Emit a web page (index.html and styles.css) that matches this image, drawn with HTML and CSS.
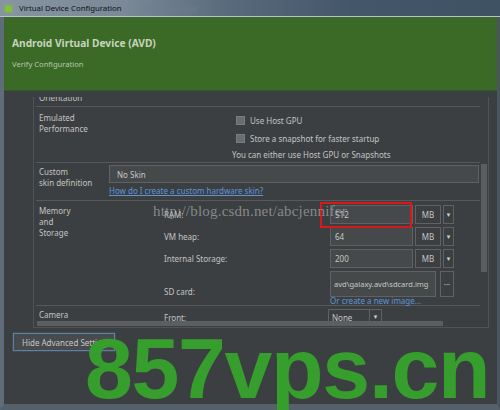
FILE: index.html
```html
<!DOCTYPE html>
<html>
<head>
<meta charset="utf-8">
<link rel="stylesheet" href="styles.css">
</head>
<body>
<div class="window">
  <div class="titlebar">
    <svg class="appicon" width="11" height="11" viewBox="0 0 11 11">
      <rect x="0" y="0" width="11" height="11" fill="#8a9a88"/>
      <path d="M2 9 V6 A3.5 3.5 0 0 1 9 6 V9 Z" fill="#7cc43a"/>
      <line x1="3" y1="2" x2="4" y2="3.4" stroke="#7cc43a" stroke-width="0.8"/>
      <line x1="8" y1="2" x2="7" y2="3.4" stroke="#7cc43a" stroke-width="0.8"/>
    </svg>
    <span class="title">Virtual Device Configuration</span>
    <span class="ghost">AVD Manager</span>
  </div>
  <div class="frame">
    <div class="header">
      <div class="h1">Android Virtual Device (AVD)</div>
      <div class="h2">Verify Configuration</div>
    </div>
    <div class="body">
      <div class="pane">
        <div class="rows">
          <div class="row r-orient">
            <div class="lbl">Orientation</div>
          </div>
          <div class="row r-perf">
            <div class="lbl">Emulated<br>Performance</div>
            <div class="perf">
              <div class="chk"><span class="box"></span>Use Host GPU</div>
              <div class="chk"><span class="box"></span>Store a snapshot for faster startup</div>
              <div class="note">You can either use Host GPU or Snapshots</div>
            </div>
          </div>
          <div class="row r-skin">
            <div class="lbl">Custom<br>skin definition</div>
            <div class="skin">
              <div class="field skinfield">No Skin</div>
              <div class="link">How do I create a custom hardware skin?</div>
            </div>
          </div>
          <div class="row r-mem">
            <div class="lbl">Memory<br>and<br>Storage</div>
            <div class="mem">
              <div class="mlbl">RAM:</div>
              <div class="field num ram">512</div>
              <div class="unit"><span>MB</span><span class="arr">&#9660;</span></div>
              <div class="mlbl">VM heap:</div>
              <div class="field num">64</div>
              <div class="unit"><span>MB</span><span class="arr">&#9660;</span></div>
              <div class="mlbl">Internal Storage:</div>
              <div class="field num">200</div>
              <div class="unit"><span>MB</span><span class="arr">&#9660;</span></div>
              <div class="mlbl sdl">SD card:</div>
              <div class="sdwrap">
                <div class="sdline">
                  <div class="field sd">avd\galaxy.avd\sdcard.img</div>
                  <div class="dots">&middot;&middot;&middot;</div>
                </div>
                <div class="link link2">Or create a new image...</div>
              </div>
            </div>
          </div>
          <div class="row r-cam">
            <div class="lbl">Camera</div>
            <div class="cam">
              <div class="mlbl">Front:</div>
              <div class="combo"><span>None</span><span class="arr">&#9660;</span></div>
            </div>
          </div>
        </div>
        <div class="vscroll"></div>
        <div class="hscroll"></div>
      </div>
      <div class="btnrow">
        <div class="btn">Hide Advanced Settings</div>
      </div>
    </div>
  </div>
  <div class="redbox"></div>
  <div class="wm-csdn">http://blog.csdn.net/abcjennifer</div>
  <div class="wm-big">857vps.cn</div>
</div>
</body>
</html>
```

FILE: styles.css
```css
html, body {
  margin: 0;
  padding: 0;
  background: #1a1a1a;
}
.window {
  position: relative;
  width: 500px;
  height: 410px;
  overflow: hidden;
  background: #3c3f41;
  font-family: "Noto Sans", "Open Sans", sans-serif;
  font-size: 8px;
  color: #c4c4c4;
}
.titlebar {
  height: 16px;
  display: flex;
  align-items: center;
  background: linear-gradient(90deg, #8795a2 0%, #7a8897 25%, #5a6b7d 45%, #44566a 70%, #3f5264 100%);
  border-bottom: 1px solid #b5c3d0;
}
.appicon {
  margin-left: 3px;
  margin-right: 5px;
}
.title {
  font-size: 7.8px;
  color: #0e1218;
}
.ghost {
  margin-left: 26px;
  font-size: 8px;
  color: #6d7e90;
  filter: blur(1px);
}
.frame {
  height: 387px;
  border-left: 4px solid #5f6d7a;
  border-right: 3px solid #4a5560;
  border-bottom: 6px solid #56606a;
  display: flex;
  flex-direction: column;
}
.header {
  height: 74px;
  background: #3a6a25;
  padding-left: 8px;
  box-sizing: border-box;
  padding-top: 19px;
  border-bottom: 1px solid #33592a;
}
.h1 {
  font-size: 10.2px;
  font-weight: bold;
  color: #c6d4bf;
}
.h2 {
  margin-top: 9px;
  font-size: 7.6px;
  color: #b8c8b0;
}
.body {
  flex: 1;
  padding-left: 29px;
  padding-right: 8px;
  padding-top: 6px;
}
.pane {
  position: relative;
  height: 231px;
  border: 1px solid #4f5355;
  border-top: none;
  overflow: hidden;
  box-sizing: border-box;
}
.rows {
  margin-top: -5px;
  margin-left: 2px;
  width: 444px;
}
.row {
  display: flex;
  border-bottom: 1px solid #55595b;
  box-sizing: border-box;
}
.lbl {
  width: 70px;
  padding-left: 3px;
  line-height: 11px;
  flex: none;
}
.r-orient {
  height: 15px;
}
.r-perf {
  height: 56px;
}
.r-perf .lbl {
  padding-top: 5px;
}
.perf {
  padding-left: 123px;
  padding-top: 8px;
}
.chk {
  display: flex;
  align-items: center;
  height: 11px;
  margin-left: 4px;
  margin-bottom: 7px;
}
.box {
  width: 7px;
  height: 7px;
  background: #6a6d70;
  border: 1px solid #7a7d80;
  margin-right: 5px;
}
.note {
  margin-top: -2px;
}
.r-skin {
  height: 38px;
}
.r-skin .lbl {
  padding-top: 3px;
}
.skin {
  padding-top: 2px;
}
.field {
  background: #45494a;
  border: 1px solid #5e6264;
  box-sizing: border-box;
  color: #c8c8c8;
  display: flex;
  align-items: center;
}
.skinfield {
  width: 370px;
  height: 18px;
  padding-left: 7px;
}
.link {
  color: #5c95d8;
  text-decoration: underline;
  margin-top: 2px;
}
.r-mem {
  height: 105px;
}
.r-mem .lbl {
  padding-top: 4px;
}
.mem {
  display: grid;
  grid-template-columns: 164px 83px 39px;
  column-gap: 2px;
  row-gap: 3px;
  padding-left: 55px;
  padding-top: 4px;
  align-items: center;
}
.mlbl {
  height: 18px;
  display: flex;
  align-items: center;
}
.num {
  height: 19px;
  padding-left: 4px;
}
.unit {
  display: flex;
  height: 19px;
  gap: 2px;
}
.unit span {
  border: 1px solid #5e6264;
  box-sizing: border-box;
  display: flex;
  align-items: center;
  justify-content: center;
}
.unit span:first-child {
  width: 26px;
}
.arr {
  width: 11px;
  font-size: 6px;
  color: #d0d0d0;
}
.sdl {
  height: 34px;
  align-self: start;
  padding-top: 6px;
  box-sizing: border-box;
}
.sdwrap {
  grid-column: 2 / 4;
}
.sdline {
  display: flex;
  gap: 4px;
}
.sd {
  width: 107px;
  height: 26px;
  padding-left: 3px;
  white-space: nowrap;
  font-size: 7.5px;
}
.dots {
  width: 14px;
  height: 26px;
  border: 1px solid #5e6264;
  box-sizing: border-box;
  display: flex;
  align-items: center;
  justify-content: center;
  font-size: 8px;
}
.link2 {
  text-decoration: none;
  margin-top: -2px;
}
.r-cam {
  height: 30px;
  border-bottom: none;
}
.r-cam .lbl {
  padding-top: 3px;
}
.cam {
  display: flex;
  padding-left: 55px;
  padding-top: 3px;
}
.cam .mlbl {
  width: 164px;
  height: 16px;
  padding-top: 1px;
  box-sizing: border-box;
}
.combo {
  display: flex;
  width: 54px;
  height: 16px;
  border: 1px solid #5e6264;
  box-sizing: border-box;
}
.combo span:first-child {
  flex: 1;
  padding-left: 3px;
  display: flex;
  align-items: center;
}
.combo .arr {
  border-left: 1px solid #5e6264;
  display: flex;
  align-items: center;
  justify-content: center;
}
.vscroll {
  position: absolute;
  left: 447px;
  top: 67px;
  width: 6px;
  height: 108px;
  background: #5b5e60;
}
.hscroll {
  position: absolute;
  left: 3px;
  top: 224px;
  width: 406px;
  height: 5px;
  background: #5c5f61;
}
.btnrow {
  padding-top: 5px;
  margin-left: -20px;
}
.btn {
  width: 102px;
  height: 18px;
  box-sizing: border-box;
  border: 1px solid #5d7fa8;
  background: #474b4e;
  box-shadow: 0 0 1px #7090b8;
  display: flex;
  align-items: center;
  padding-left: 8px;
  color: #c8c8c8;
  white-space: nowrap;
}
.redbox {
  position: absolute;
  left: 320px;
  top: 202px;
  width: 92px;
  height: 26px;
  border: 2px solid #d8191c;
  box-sizing: border-box;
}
.wm-csdn {
  position: absolute;
  left: 153px;
  top: 203px;
  font-family: "Liberation Serif", serif;
  font-size: 15px;
  color: rgba(170, 170, 170, 0.7);
  letter-spacing: 0.2px;
}
.wm-big {
  position: absolute;
  left: 85px;
  top: 318px;
  font-family: "Liberation Sans", sans-serif;
  font-weight: bold;
  font-size: 86px;
  line-height: 100px;
  color: #369e2c;
  letter-spacing: -1.3px;
}
```
